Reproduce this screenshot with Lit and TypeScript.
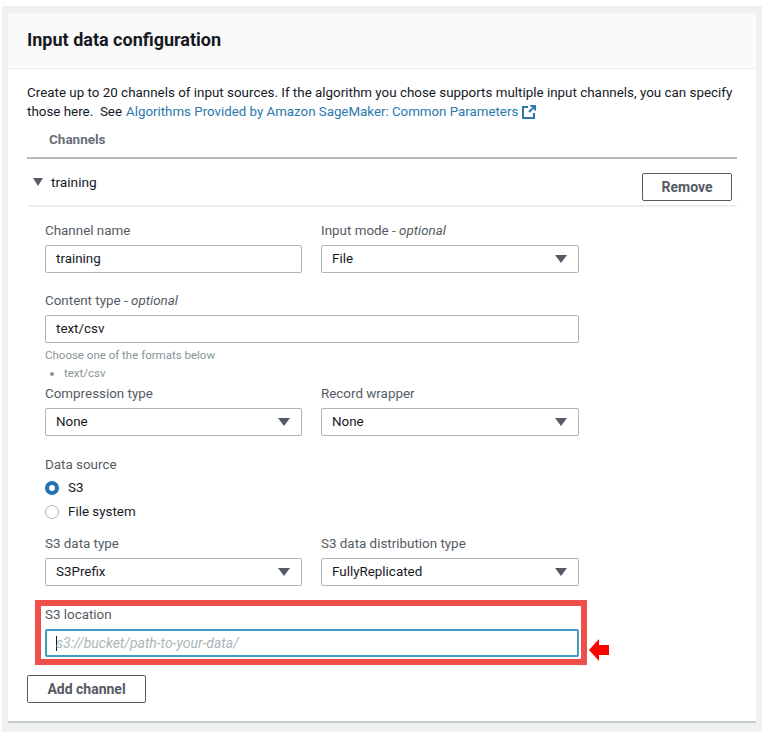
import { LitElement, html, css } from 'lit';
import { customElement } from 'lit/decorators.js';

const caret = html`<svg class="caret" viewBox="0 0 12 8" width="12" height="8"><path d="M0 0h12L6 8z"></path></svg>`;

@customElement('app-root')
export class AppRoot extends LitElement {
  static styles = css`
    :host {
      display: block;
      width: 768px;
      height: 732px;
      background: #fff;
      font-family: Roboto, sans-serif;
      font-size: 13.4px;
      line-height: 18px;
      color: #16191f;
      overflow: hidden;
    }
    * {
      box-sizing: border-box;
    }
    .page {
      margin: 6px 6px 0 2px;
      height: 726px;
      padding: 7px 6px 0;
      background: #f0f2f2;
    }
    .card {
      height: 710px;
      background: #fff;
      border-bottom: 2px solid #c6cbcc;
    }
    .head {
      height: 56px;
      padding: 0 19px 2px;
      display: flex;
      align-items: center;
      background: #fafafa;
      border-bottom: 1px solid #eaeded;
      font-size: 18px;
      font-weight: 700;
    }
    .body {
      padding: 14px 19px 0;
    }
    .intro {
      height: 38px;
      line-height: 19px;
    }
    .see {
      display: flex;
      align-items: center;
      gap: 4px;
    }
    a {
      display: flex;
      align-items: center;
      gap: 4px;
      font-size: 13.3px;
      color: #2b78ad;
      text-decoration: none;
    }
    .channels {
      margin-top: 9px;
      padding: 0 0 9px 22px;
      height: 29px;
      font-size: 13.5px;
      font-weight: 700;
      color: #687078;
      border-bottom: 2px solid #b5bcbd;
    }
    .channel-row {
      height: 48px;
      display: flex;
      padding: 0 5px 0 6px;
      border-bottom: 2px solid #eef0f0;
    }
    .toggle {
      flex: 1;
      display: flex;
      align-items: center;
      gap: 8px;
      height: 46px;
      font-size: 13.7px;
    }
    .toggle svg {
      fill: #545b64;
    }
    button {
      font: inherit;
      font-size: 14px;
      font-weight: 700;
      background: #fff;
      color: #545b64;
      border: 1px solid #545b64;
      border-radius: 2px;
      height: 28px;
      padding: 0;
      cursor: pointer;
    }
    .remove {
      width: 90px;
      margin-top: 14px;
    }
    .fields {
      padding: 15px 0 0 18px;
      width: 552px;
    }
    .row {
      display: grid;
      grid-template-columns: 257px 258px;
      column-gap: 19px;
    }
    .content-type {
      margin-top: 19px;
    }
    .compression {
      margin-top: 3px;
    }
    .source {
      margin-top: 20px;
    }
    .s3-type {
      margin-top: 11px;
    }
    label,
    .label {
      display: block;
      height: 18px;
      margin-bottom: 5px;
      color: #545b64;
    }
    em {
      font-style: italic;
    }
    .box {
      height: 28px;
      display: flex;
      align-items: center;
      justify-content: space-between;
      padding: 0 11px 0 10px;
      background: #fff;
      border: 1px solid #aab7b8;
      border-radius: 2px;
      color: #16191f;
    }
    .caret {
      fill: #545b64;
      flex: none;
    }
    .hint {
      margin-top: 3px;
      font-size: 11.5px;
      line-height: 18px;
      color: #879596;
    }
    .hint ul {
      margin: 0;
      padding: 0 0 0 19px;
    }
    .radios {
      margin-top: -3px;
    }
    .radio {
      display: flex;
      align-items: center;
      gap: 9px;
      height: 24px;
      color: #16191f;
    }
    .dot {
      width: 14px;
      height: 14px;
      border-radius: 50%;
      border: 1px solid #aab7b8;
    }
    .dot.on {
      border: 4px solid #1f73b7;
    }
    .s3 {
      position: relative;
      margin-top: 20px;
    }
    .s3 .box {
      border: 2px solid #3f9cc2;
      color: #aab7b8;
      font-size: 14px;
      font-style: italic;
      justify-content: flex-start;
      padding-left: 9px;
    }
    .cursor {
      width: 1px;
      height: 15px;
      margin-right: -1px;
      background: #16191f;
    }
    .highlight {
      position: absolute;
      left: -10px;
      right: -8px;
      top: -6px;
      bottom: -8px;
      border: 6px solid #ee4f4a;
      pointer-events: none;
    }
    .arrow {
      position: absolute;
      left: 544px;
      top: 33px;
      fill: #fe0000;
    }
    .add {
      display: block;
      width: 119px;
      margin-top: 18px;
    }
  `;

  render() {
    return html`
      <div class="page">
        <section class="card">
          <div class="head">Input data configuration</div>
          <div class="body">
            <div class="intro">
              <div>Create up to 20 channels of input sources. If the algorithm you chose supports multiple input channels, you can specify</div>
              <div class="see">
                <span>those here.&nbsp; See</span>
                <a href="#">Algorithms Provided by Amazon SageMaker: Common Parameters<svg width="14" height="14" viewBox="0 0 14 14" fill="none" stroke="#2b78ad" stroke-width="2"><path d="M6 2H1v11h11V8"></path><path d="M7 7l6-6M8.500 1H13v4.500"></path></svg></a>
              </div>
            </div>
            <div class="channels">Channels</div>
            <div class="channel-row">
              <div class="toggle">
                <svg width="10" height="8" viewBox="0 0 10 8"><path d="M0 0h10L5 8z"></path></svg>
                training
              </div>
              <button class="remove">Remove</button>
            </div>
            <div class="fields">
              <div class="row">
                <div><label>Channel name</label><div class="box">training</div></div>
                <div><label>Input mode - <em>optional</em></label><div class="box">File ${caret}</div></div>
              </div>
              <div class="content-type">
                <label>Content type - <em>optional</em></label>
                <div class="box">text/csv</div>
                <div class="hint">
                  Choose one of the formats below
                  <ul><li>text/csv</li></ul>
                </div>
              </div>
              <div class="row compression">
                <div><label>Compression type</label><div class="box">None ${caret}</div></div>
                <div><label>Record wrapper</label><div class="box">None ${caret}</div></div>
              </div>
              <div class="source">
                <div class="label">Data source</div>
                <div class="radios">
                  <div class="radio"><span class="dot on"></span>S3</div>
                  <div class="radio"><span class="dot"></span>File system</div>
                </div>
              </div>
              <div class="row s3-type">
                <div><label>S3 data type</label><div class="box">S3Prefix ${caret}</div></div>
                <div><label>S3 data distribution type</label><div class="box">FullyReplicated ${caret}</div></div>
              </div>
              <div class="s3">
                <label>S3 location</label>
                <div class="box"><span class="cursor"></span>s3://bucket/path-to-your-data/</div>
                <div class="highlight"></div>
                <svg class="arrow" width="20" height="22" viewBox="0 0 20 22"><path d="M0 11L10 0v6h10v10H10v6z"></path></svg>
              </div>
            </div>
            <button class="add">Add channel</button>
          </div>
        </section>
      </div>
    `;
  }
}
